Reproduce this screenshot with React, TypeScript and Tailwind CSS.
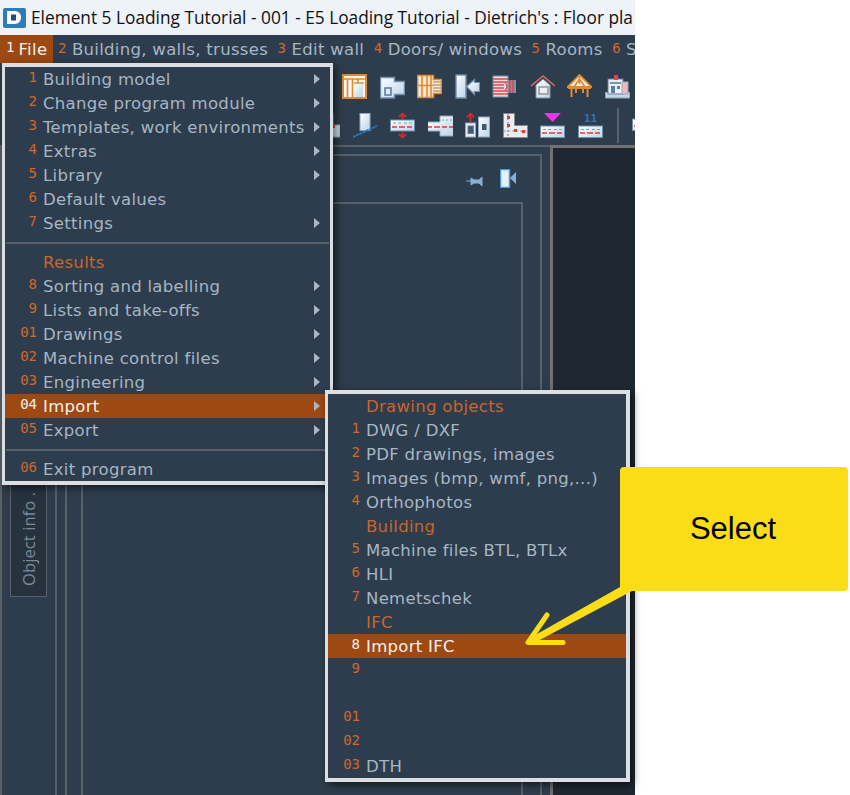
import React from 'react';

type Item = { n?: string; label?: string; head?: boolean; more?: boolean; active?: boolean; sep?: boolean };

const fileItems: Item[] = [
  { n: '1', label: 'Building model', more: true },
  { n: '2', label: 'Change program module', more: true },
  { n: '3', label: 'Templates, work environments', more: true },
  { n: '4', label: 'Extras', more: true },
  { n: '5', label: 'Library', more: true },
  { n: '6', label: 'Default values' },
  { n: '7', label: 'Settings', more: true },
  { sep: true },
  { label: 'Results', head: true },
  { n: '8', label: 'Sorting and labelling', more: true },
  { n: '9', label: 'Lists and take-offs', more: true },
  { n: '01', label: 'Drawings', more: true },
  { n: '02', label: 'Machine control files', more: true },
  { n: '03', label: 'Engineering', more: true },
  { n: '04', label: 'Import', more: true, active: true },
  { n: '05', label: 'Export', more: true },
  { sep: true },
  { n: '06', label: 'Exit program' },
];

const importItems: Item[] = [
  { label: 'Drawing objects', head: true },
  { n: '1', label: 'DWG / DXF' },
  { n: '2', label: 'PDF drawings, images' },
  { n: '3', label: 'Images (bmp, wmf, png,...)' },
  { n: '4', label: 'Orthophotos' },
  { label: 'Building', head: true },
  { n: '5', label: 'Machine files BTL, BTLx' },
  { n: '6', label: 'HLI' },
  { n: '7', label: 'Nemetschek' },
  { label: 'IFC', head: true },
  { n: '8', label: 'Import IFC', active: true },
  { n: '9' },
  {},
  { n: '01' },
  { n: '02' },
  { n: '03', label: 'DTH' },
];

const topMenu = [
  { n: '2', label: 'Building, walls, trusses' },
  { n: '3', label: 'Edit wall' },
  { n: '4', label: 'Doors/ windows' },
  { n: '5', label: 'Rooms' },
  { n: '6', label: 'S' },
];

function MenuRow({ item }: { item: Item }) {
  if (item.sep) {
    return (
      <div className="h-[15px] flex items-center">
        <div className="w-full h-[2px] mx-[1px] bg-[#596068]" />
      </div>
    );
  }
  return (
    <div className={`h-[24px] flex items-center ${item.active ? 'bg-[#9e4912]' : ''}`}>
      <span
        className={`w-[32px] shrink-0 text-right text-[14px] leading-none -mt-[4px] font-['DejaVu_Sans_Mono',monospace] ${
          item.active ? 'text-[#f2f2f2]' : 'text-[#d2672a]'
        }`}
      >
        {item.n}
      </span>
      <span
        className={`ml-[6px] mt-[3px] flex-1 whitespace-nowrap text-[16.5px] leading-none tracking-[0.3px] ${
          item.head ? 'text-[#c9652a]' : item.active ? 'text-[#f4f1ec]' : 'text-[#a6b6c4]'
        }`}
      >
        {item.label}
      </span>
      {item.more && (
        <svg width="6" height="10" viewBox="0 0 6 10" className="mr-[10px] shrink-0">
          <polygon points="0,0 6,5 0,10" fill="#aab6c1" />
        </svg>
      )}
    </div>
  );
}

const Wall = ({ y = 13 }: { y?: number }) => (
  <g>
    <rect x="0.5" y={y} width="24" height="11.5" fill="url(#steel)" stroke="#6f8fae" />
    <path d={`M3 ${y + 3.5}h3M8 ${y + 3.5}h3M14 ${y + 3.5}h3M19 ${y + 3.5}h3`} stroke="#8b9aa8" strokeWidth="1.2" />
    <path d={`M2 ${y + 7}h5M9 ${y + 7}h6M17 ${y + 7}h5`} stroke="#e43a3a" strokeWidth="1.4" />
  </g>
);

const toolIcons: React.ReactNode[] = [
  // timber frame wall
  <g key="a">
    <rect x="1" y="1" width="23" height="23" fill="#f4f6f8" stroke="#e08a2c" strokeWidth="2" />
    <path d="M1 5h23M5.5 5v18M10.5 5v18M16 5v18" stroke="#e08a2c" strokeWidth="1.6" />
    <rect x="12" y="9" width="9" height="14" fill="url(#steel)" />
    <path d="M12 9h10" stroke="#e08a2c" strokeWidth="1.4" />
  </g>,
  // room plan
  <g key="b">
    <path d="M0.5 3.5h14v4h10v13h-10v3.500h-14z" fill="url(#steel)" stroke="#6f8fae" strokeWidth="1.4" />
    <rect x="5" y="14" width="6" height="7" fill="#dfe9f1" stroke="#5f7f9f" strokeWidth="1.6" />
  </g>,
  // truss plan
  <g key="c">
    <path d="M0.500 1.500h16v4h8v14h-8v4h-16z" fill="#f2e7d8" stroke="#e08a2c" strokeWidth="1.6" />
    <path d="M1 11.500h15M5 2v21M10 2v21M14 2v21" stroke="#e08a2c" strokeWidth="1.6" />
    <path d="M16 8h8M16 11h8M16 14h8M16 17h8" stroke="#c9a06c" strokeWidth="1.3" />
  </g>,
  // door plan
  <g key="d">
    <rect x="1" y="1" width="10" height="23" fill="url(#steel)" stroke="#6f8fae" strokeWidth="1.4" />
    <path d="M11.500 12.500l8-7v3h5v9h-5v3z" fill="url(#steel)" stroke="#6f8fae" strokeWidth="1.2" />
  </g>,
  // red wall plan
  <g key="e">
    <rect x="1" y="2" width="15" height="21" fill="#e9dfe3" stroke="#6f8fae" />
    <path d="M1 5h15M1 8h15M1 11h11M1 14h11M1 17h15M1 20h15" stroke="#e5414b" strokeWidth="1.5" />
    <rect x="16" y="6" width="8" height="13" fill="#7e93a8" />
    <path d="M18 6v13M21 6v13M13 9a4 4 0 0 1 0 7" stroke="#e5414b" strokeWidth="1.4" fill="none" />
  </g>,
  // house
  <g key="f">
    <path d="M6 11v13h14V11l-7-6z" fill="url(#steel)" stroke="#7f95aa" />
    <rect x="9" y="13" width="9" height="7" fill="#e9eff4" stroke="#9a9a9a" strokeWidth="1.6" />
    <path d="M1 12l12-10 12 10" fill="none" stroke="#e06a5f" strokeWidth="1.6" />
  </g>,
  // roof truss
  <g key="g">
    <path d="M0.500 13l12-12 12 12z" fill="#f0ece6" stroke="#e08a2c" strokeWidth="1.800" />
    <path d="M12.500 1v9M7 13l5.500-8 5.500 8" stroke="#e08a2c" strokeWidth="1.600" fill="none" />
    <path d="M1 14h23M4.500 13v10M20.500 13v10M9 14v5M16 14v5" stroke="#e08a2c" strokeWidth="2" />
  </g>,
  // building
  <g key="h">
    <path d="M0.500 18.500h24v5.500h-24z" fill="#c5d8e8" stroke="#8fa9c0" />
    <rect x="3" y="5" width="15" height="15" fill="#e9f0f6" stroke="#5f7f9f" />
    <rect x="17" y="8" width="6" height="12" fill="#f1b8bb" stroke="#8fa9c0" />
    <rect x="9" y="1" width="4" height="5" fill="#e5414b" />
    <path d="M5 9h11" stroke="#5f7f9f" strokeWidth="1.600" />
    <rect x="6" y="12" width="4" height="7" fill="#5f7f9f" />
    <rect x="12" y="12" width="3" height="3" fill="#5f7f9f" />
  </g>,
];

const toolIcons2: React.ReactNode[] = [
  // partly under the menu
  <g key="a">
    <path d="M12 0h6v12h7v12H12z" fill="url(#steel)" stroke="#8fa9c0" />
    <rect x="17" y="12" width="3" height="3" fill="#e5414b" />
  </g>,
  <g key="b">
    <rect x="7" y="0.500" width="10" height="17" fill="url(#steel)" stroke="#8fa9c0" />
    <path d="M0 24L24 13" stroke="#2f76bf" strokeWidth="1.800" strokeDasharray="3 0.500" />
  </g>,
  <g key="c">
    <rect x="0.500" y="7" width="24" height="11" fill="url(#steel)" stroke="#6f8fae" />
    <path d="M3 10h3M8 10h3M14 10h3M19 10h3" stroke="#8b9aa8" strokeWidth="1.200" />
    <path d="M2 14h5M9 14h6M17 14h5" stroke="#e43a3a" strokeWidth="1.400" />
    <path d="M12.500 6V1M9 4l3.500-3.500L16 4M12.500 19v5M9 21l3.500 3.500L16 21" stroke="#d8272f" strokeWidth="1.800" fill="none" />
  </g>,
  <g key="d">
    <path d="M0 9h12V3h13v20H12v-5H0z" fill="url(#steel)" />
    <path d="M0 9h12V3h13M25 23H12v-5H0" fill="none" stroke="#8fa9c0" />
    <path d="M0 14h4M6 14h6M14 14h5M21 14h4" stroke="#e43a3a" strokeWidth="1.500" />
    <path d="M14 7h2M18 7h2M22 7h2" stroke="#8b9aa8" strokeWidth="1.200" />
  </g>,
  <g key="e">
    <rect x="0.500" y="10" width="10" height="14" fill="#e6eef5" stroke="#8fa9c0" />
    <rect x="3" y="13" width="5.500" height="7.500" fill="#3a5a78" stroke="#6a7f93" />
    <rect x="13.500" y="4" width="11" height="20" fill="url(#steel)" stroke="#8fa9c0" />
    <rect x="17" y="11" width="4.500" height="6" fill="#3a5a78" />
    <path d="M5.500 9V1M2 4.500L5.500 0.500 9 4.500" stroke="#d8272f" strokeWidth="1.800" fill="none" />
  </g>,
  <g key="f">
    <path d="M0.500 0.500h11v12h13v12H0.500z" fill="#e8edf1" stroke="#8b8b8b" />
    <path d="M5 1v22" stroke="#999" strokeWidth="1.400" strokeDasharray="2 2" />
    <path d="M1 18h23" stroke="#999" strokeWidth="1" strokeDasharray="2 2" />
    <rect x="4" y="3" width="3" height="3" fill="#e43a3a" />
    <rect x="4" y="11" width="3" height="3" fill="#e43a3a" />
    <rect x="11" y="16" width="3" height="3" fill="#e43a3a" />
    <rect x="19" y="17" width="3" height="3" fill="#e43a3a" />
  </g>,
  <g key="g">
    <polygon points="4,0 21,0 12.500,9" fill="#f032e6" />
    <Wall />
  </g>,
  <g key="h">
    <text x="12.500" y="9" textAnchor="middle" fontSize="11" fontWeight="700" fill="#2f76bf" fontFamily="'DejaVu Sans Mono', monospace">
      11
    </text>
    <Wall />
  </g>,
];

function ToolIcon({ children }: { children: React.ReactNode }) {
  return (
    <svg width="25" height="25" viewBox="0 0 25 25" className="shrink-0">
      {children}
    </svg>
  );
}

export default function App() {
  return (
    <div className="relative w-[850px] h-[795px] overflow-hidden bg-white font-['DejaVu_Sans',sans-serif]">
      {/* gradient shared by the toolbar icons */}
      <svg width="0" height="0" className="absolute">
        <defs>
          <linearGradient id="steel" x1="0" y1="0" x2="1" y2="1">
            <stop offset="0" stopColor="#ffffff" />
            <stop offset="1" stopColor="#bcd3e6" />
          </linearGradient>
        </defs>
      </svg>

      <div className="w-[635px] h-full flex flex-col overflow-hidden bg-[#2e3d4d]">
        {/* Title bar */}
        <div className="h-[35px] shrink-0 flex items-center bg-[#eef2f9] overflow-hidden whitespace-nowrap">
          <div className="ml-[3px] mr-[5px] w-[23px] h-[20px] shrink-0 rounded-[2px] bg-[#2f7db8] flex items-center justify-center">
            <svg width="15" height="13" viewBox="0 0 15 13">
              <path d="M0 0h8a6 6 0 0 1 6 6.500a6 6 0 0 1-6 6.500H0z" fill="#ffffff" />
              <rect x="4" y="3.500" width="5" height="6" fill="#2b4a6b" />
            </svg>
          </div>
          <span className="font-['Open_Sans',sans-serif] text-[17.3px] leading-none text-[#111]">
            Element 5 Loading Tutorial - 001 - E5 Loading Tutorial - Dietrich's : Floor pla
          </span>
        </div>

        {/* Menu bar */}
        <div className="h-[30px] shrink-0 flex items-center whitespace-nowrap overflow-hidden">
          <div className="h-[28px] w-[53px] -mt-[2px] shrink-0 bg-[#9e4912] flex items-center pl-[6px]">
            <span className="text-[14px] leading-none -mt-[4px] text-[#f2f2f2] font-['DejaVu_Sans_Mono',monospace]">1</span>
            <span className="ml-[4px] mt-[3px] text-[16.5px] leading-none tracking-[0.35px] text-[#f4f1ec]">File</span>
          </div>
          <div className="flex items-center ml-[5px] gap-[9.5px]">
            {topMenu.map((m) => (
              <div key={m.n} className="flex items-center gap-[5.500px]">
                <span className="text-[14px] leading-none -mt-[4px] text-[#d2672a] font-['DejaVu_Sans_Mono',monospace]">{m.n}</span>
                <span className="mt-[1px] text-[16.5px] leading-none tracking-[0.3px] text-[#a6b6c4]">{m.label}</span>
              </div>
            ))}
          </div>
        </div>

        {/* Toolbars */}
        <div className="h-[80px] shrink-0 flex flex-col gap-[14px] pt-[9px]">
          <div className="flex gap-[12.5px] pl-[342px]">
            {toolIcons.map((icon, i) => (
              <ToolIcon key={i}>{icon}</ToolIcon>
            ))}
          </div>
          <div className="flex items-center gap-[12.5px] pl-[315px]">
            {toolIcons2.map((icon, i) => (
              <ToolIcon key={i}>{icon}</ToolIcon>
            ))}
            <div className="w-[2px] h-[35px] -my-[5px] shrink-0 bg-[#596068] ml-[2px]" />
            <ToolIcon>
              <Wall y={6} />
            </ToolIcon>
          </div>
        </div>

        {/* Work area */}
        <div className="flex-1 flex min-h-0">
          <div className="w-[550px] shrink-0 flex border-t-2 border-[#596068]">
            {/* left rail */}
            <div className="w-[57px] shrink-0 border-l-[2px] border-r-[2px] border-[#596068] pl-[8px] pt-[13px]">
              <div className="w-[37px] h-[437px] flex justify-center items-start border border-[#596068] bg-[#26333f]">
                <span className="[writing-mode:vertical-rl] rotate-180 h-[433px] pt-[8px] ml-[1px] font-['Open_Sans',sans-serif] text-[16.5px] tracking-[0.1px] text-[#78899a]">
                  Object info .
                </span>
              </div>
            </div>

            {/* docked panel */}
            <div className="ml-[8px] w-[477px] mt-[7px] border-l-2 border-t-2 border-r-2 border-[#596068] flex flex-col">
              <div className="h-[46px] shrink-0 flex items-center justify-end gap-[17px] pr-[23px]">
                <svg width="17" height="12" viewBox="0 0 17 12" className="mt-[4px]">
                  <path d="M0 6h5M5 3l3 2h5l3-3v9l-3-3H8l-3 2z" fill="#86b1d6" stroke="#86b1d6" />
                </svg>
                <svg width="17" height="19" viewBox="0 0 17 19" className="-mt-[2px]">
                  <rect x="0.500" y="0.500" width="9" height="18" fill="#e6f1fb" stroke="#4d97de" strokeWidth="1.500" />
                  <polygon points="16,3 10,9 16,15" fill="#86b1d6" />
                </svg>
              </div>
              <div className="flex-1 ml-[14px] mr-[17px] border-l-2 border-t-2 border-r-2 border-[#596068]" />
            </div>
          </div>
          {/* drawing view */}
          <div className="flex-1 bg-[#1f2830] border-l-[3px] border-t-[3px] border-[#6f7173]" />
        </div>
      </div>

      {/* File menu */}
      <div className="absolute left-[2px] top-[63px] w-[331px] border-[3px] border-t-[4px] border-b-[4px] border-[#dcdfe2] bg-[#2e3d4d] shadow-[3px_3px_8px_rgba(0,0,0,0.55)]">
        {fileItems.map((item, i) => (
          <MenuRow key={i} item={item} />
        ))}
      </div>

      {/* Import submenu */}
      <div className="absolute left-[325px] top-[390px] w-[305px] border-[3px] border-r-[4px] border-t-[4px] border-b-[4px] border-[#dcdfe2] bg-[#2e3d4d] shadow-[3px_3px_8px_rgba(0,0,0,0.55)]">
        {importItems.map((item, i) => (
          <MenuRow key={i} item={item} />
        ))}
      </div>

      {/* Callout */}
      <div className="absolute left-[620px] top-[467px] w-[228px] h-[124px] rounded-[4px] bg-[#fbdd17] flex items-center justify-center pr-[2px] font-['Liberation_Sans',sans-serif] text-[31px] text-black">
        Select
      </div>
      <svg className="absolute left-[520px] top-[580px]" width="130" height="80" viewBox="520 580 130 80">
        <polygon points="620,587 632,591 534,643 530,638" fill="#fbdd17" />
        <path d="M547 615L528 642.500L563 642.500" fill="none" stroke="#fbdd17" strokeWidth="5" strokeLinecap="round" strokeLinejoin="round" />
      </svg>
    </div>
  );
}
